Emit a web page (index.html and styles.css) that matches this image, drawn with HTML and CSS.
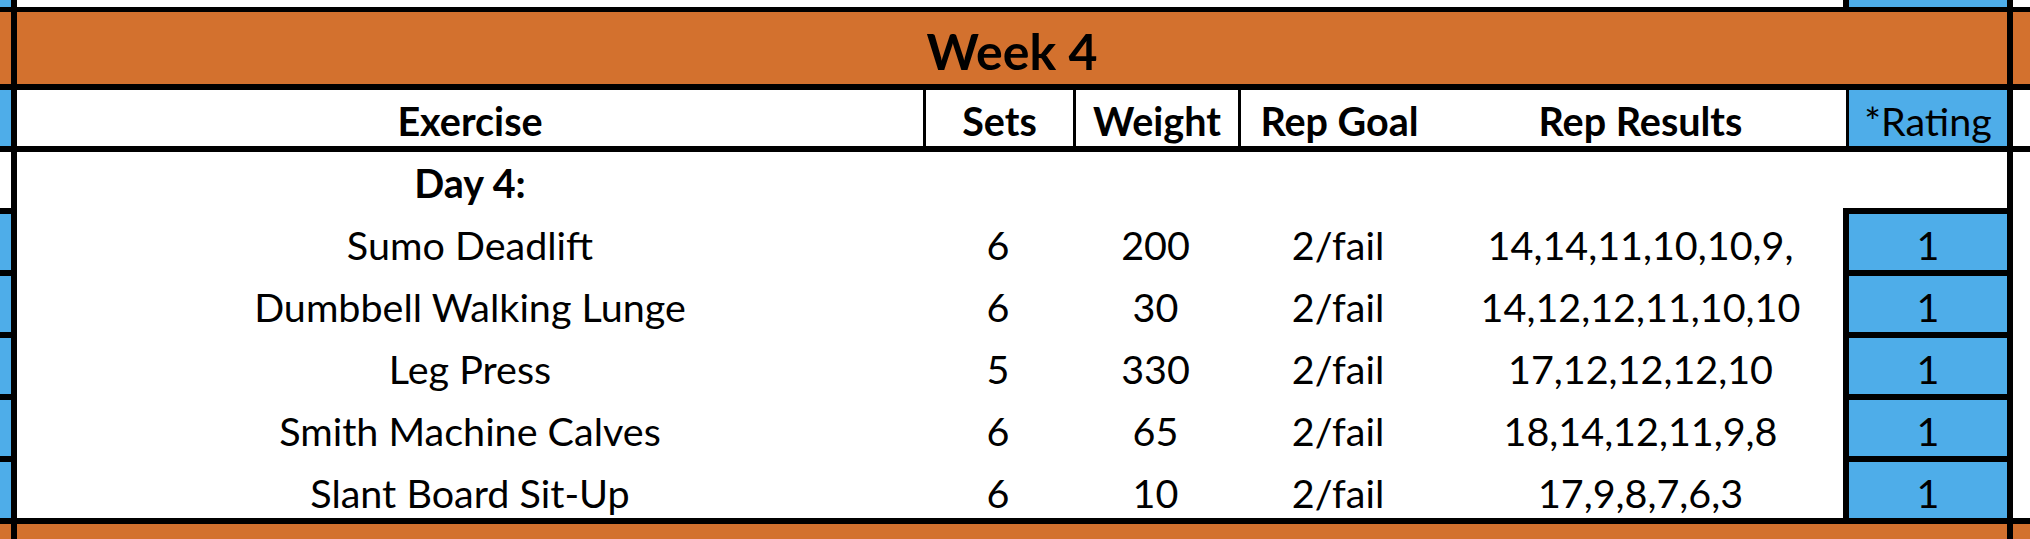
FILE: index.html
```html
<!DOCTYPE html>
<html>
<head>
<meta charset="utf-8">
<link rel="stylesheet" href="styles.css">
</head>
<body>
<div class="sheet">
  <div class="row top">
    <div class="strip blue"></div>
    <div class="main">
      <div class="c ghost"></div><div class="c ghost"></div><div class="c ghost"></div><div class="c ghost"></div>
      <div class="c ghost">12,12,10,10,10</div>
      <div class="c rate"></div>
    </div>
    <div class="rstrip"></div>
  </div>
  <div class="hline thin"></div>
  <div class="row week">
    <div class="strip"></div>
    <div class="main single"><div class="c title">Week 4</div></div>
    <div class="rstrip"></div>
  </div>
  <div class="hline"></div>
  <div class="row head">
    <div class="strip blue"></div>
    <div class="main">
      <div class="c b">Exercise</div>
      <div class="c b vl">Sets</div>
      <div class="c b vl">Weight</div>
      <div class="c b vl">Rep Goal</div>
      <div class="c b">Rep Results</div>
      <div class="c hrate">*Rating</div>
    </div>
    <div class="rstrip"></div>
  </div>
  <div class="hline"></div>
  <div class="row day">
    <div class="strip"></div>
    <div class="main">
      <div class="c b">Day 4:</div>
      <div class="c"></div><div class="c"></div><div class="c"></div><div class="c"></div><div class="c"></div>
    </div>
    <div class="rstrip"></div>
  </div>
  <div class="row data">
    <div class="strip cellb"></div>
    <div class="main">
      <div class="c">Sumo Deadlift</div><div class="c">6</div><div class="c">200</div><div class="c">2/fail</div><div class="c">14,14,11,10,10,9,</div><div class="c rate">1</div>
    </div>
    <div class="rstrip"></div>
  </div>
  <div class="row data">
    <div class="strip cellb"></div>
    <div class="main">
      <div class="c">Dumbbell Walking Lunge</div><div class="c">6</div><div class="c">30</div><div class="c">2/fail</div><div class="c">14,12,12,11,10,10</div><div class="c rate">1</div>
    </div>
    <div class="rstrip"></div>
  </div>
  <div class="row data">
    <div class="strip cellb"></div>
    <div class="main">
      <div class="c">Leg Press</div><div class="c">5</div><div class="c">330</div><div class="c">2/fail</div><div class="c">17,12,12,12,10</div><div class="c rate">1</div>
    </div>
    <div class="rstrip"></div>
  </div>
  <div class="row data">
    <div class="strip cellb"></div>
    <div class="main">
      <div class="c">Smith Machine Calves</div><div class="c">6</div><div class="c">65</div><div class="c">2/fail</div><div class="c">18,14,12,11,9,8</div><div class="c rate">1</div>
    </div>
    <div class="rstrip"></div>
  </div>
  <div class="row data">
    <div class="strip cellb"></div>
    <div class="main">
      <div class="c">Slant Board Sit-Up</div><div class="c">6</div><div class="c">10</div><div class="c">2/fail</div><div class="c">17,9,8,7,6,3</div><div class="c rate">1</div>
    </div>
    <div class="rstrip"></div>
  </div>
  <div class="hline"></div>
  <div class="row week tail">
    <div class="strip"></div>
    <div class="main single"></div>
    <div class="rstrip"></div>
  </div>
</div>
</body>
</html>
```

FILE: styles.css
```css
* { box-sizing: border-box; margin: 0; padding: 0; }
html, body { background: #fff; }
body {
  width: 2030px;
  height: 539px;
  overflow: hidden;
  font-family: Lato, "Liberation Sans", sans-serif;
  color: #000;
}
.sheet { display: flex; flex-direction: column; }
.row { display: grid; grid-template-columns: 11px 2002px 17px; }
.hline { height: 6px; background: #000; }
.hline.thin { height: 5px; }
.main {
  border-left: 6px solid #000;
  border-right: 6px solid #000;
  display: grid;
  grid-template-columns: 906px 150px 165px 200px 405px 164px;
}
.main.single { grid-template-columns: 1fr; }

.row.top { height: 7px; }
.row.week { height: 72px; background: #d3712e; }
.row.tail { height: 15px; }
.row.head { height: 56px; }
.row.day { height: 56px; }
.row.data { height: 62px; }

.blue { background: #4eade9; }
.strip.cellb { background: #4eade9; border-top: 6px solid #000; }

.c {
  display: flex;
  align-items: flex-end;
  justify-content: center;
  font-size: 39.5px;
  line-height: 1;
  padding-bottom: 5.5px;
  white-space: nowrap;
  min-width: 0;
}
.c.ghost { padding-bottom: 4.5px; }
.b { font-weight: 700; }
.vl { border-left: 3px solid #000; }
.title { font-size: 50px; font-weight: 700; padding-bottom: 8px; }
.hrate {
  margin-left: 3px;
  border-left: 3px solid #000;
  background: #4eade9;
}
.rate {
  background: #4eade9;
  border-left: 6px solid #000;
  border-top: 6px solid #000;
}
.row.top .rate { border-top: 0; }
```
